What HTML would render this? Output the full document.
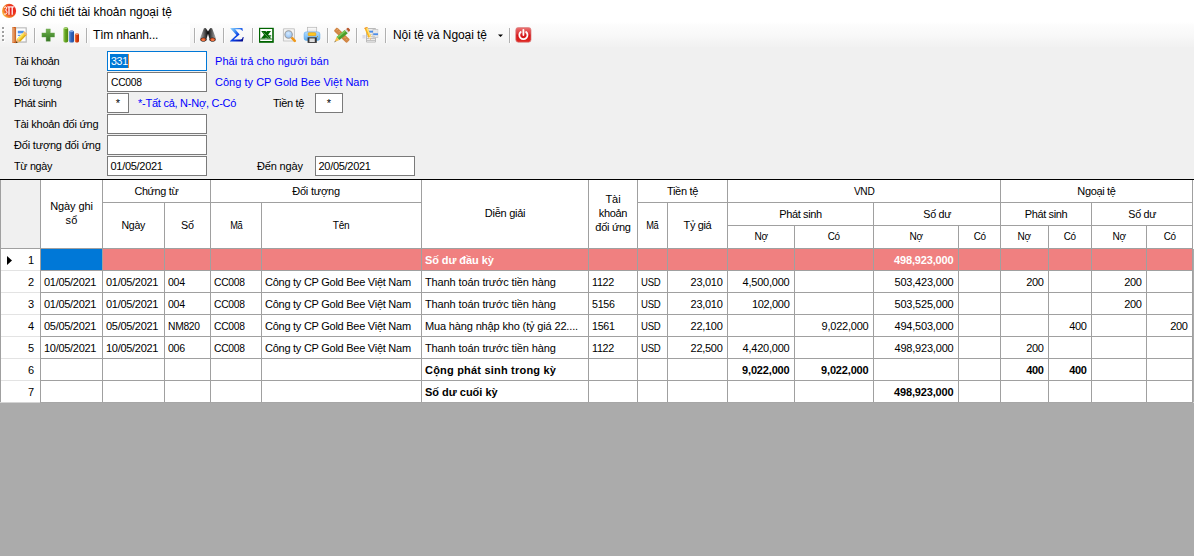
<!DOCTYPE html>
<html><head><meta charset="utf-8"><title>So chi tiet tai khoan ngoai te</title>
<style>
*{box-sizing:border-box;margin:0;padding:0}
html,body{width:1194px;height:556px;overflow:hidden;background:#ababab}
body{position:relative;font-family:"Liberation Sans",sans-serif;font-size:11px;color:#000}
.abs{position:absolute}
#title{left:0;top:0;width:1194px;height:23px;background:#fff}
#title span.t{position:absolute;left:22px;top:5px;font-size:12px;line-height:14px;white-space:nowrap}
#tb{left:0;top:22px;width:1194px;height:27px;background:linear-gradient(#ffffff,#fcfcfc 12%,#f8f8f8 50%,#f2f2f2 85%,#f0f0f0)}
#form{left:0;top:47px;width:1194px;height:132px;background:#f0f0f0}
.lbl{position:absolute;left:14px;white-space:nowrap;font-size:11px;line-height:13px}
.inp{position:absolute;height:20px;background:#fff;border:1px solid #7a7a7a;font-size:11px;line-height:13px;padding:3px 0 0 2.5px;white-space:nowrap}
.blue{color:#0000ff}
.tbt{font-size:12px;line-height:14px;white-space:nowrap}
.vl{position:absolute;width:1px;background:#a0a0a0}
.hl{position:absolute;height:1px;background:#a0a0a0}
.hc{position:absolute;height:13px;text-align:center;font-size:11px;line-height:13px;white-space:nowrap}
.c{position:absolute;height:21px;line-height:13px;padding-top:5px;font-size:11px;white-space:nowrap;overflow:hidden}
.r{text-align:right;padding-right:4.5px}
.l{padding-left:3px}
.b{font-weight:bold}
</style></head><body>

<div id="title" class="abs"><span class="t"><span style="letter-spacing:-0.031px">Sổ chi tiết tài khoản ngoại tệ</span></span></div>
<div id="tb" class="abs"></div>
<div id="form" class="abs"></div>
<div class="abs" style="left:90px;top:24px;width:100px;height:23px;background:#fff"></div>
<div class="abs tbt" style="left:93px;top:28px"><span style="letter-spacing:-0.176px">Tìm nhanh...</span></div>
<div class="abs tbt" style="left:393px;top:28px"><span style="letter-spacing:-0.089px">Nội tệ và Ngoại tệ</span></div>
<svg class="abs" style="left:1px;top:3px" width="16" height="16" viewBox="0 0 16 16">
<defs><radialGradient id="g3t" cx="0.66" cy="0.42" r="0.72"><stop offset="0" stop-color="#e81a1a"/><stop offset="0.45" stop-color="#ec3220"/><stop offset="0.75" stop-color="#f4802c"/><stop offset="1" stop-color="#fcd850"/></radialGradient></defs>
<circle cx="8.05" cy="7.9" r="7.1" fill="url(#g3t)"/>
<path d="M3.1 4.4 Q5.4 3 5.8 4.9 Q5.8 6.6 4.3 7 Q6.2 7.3 6 9.6 Q5.2 12 2.9 11" fill="none" stroke="#fff" stroke-width="0.95"/>
<path d="M6.3 3.9 H13.3" fill="none" stroke="#fff" stroke-width="1.1"/>
<path d="M8 3.9 V11.8 M11.2 3.9 V11.8" fill="none" stroke="#fff" stroke-width="1.25"/>
</svg>
<div class="abs" style="left:3px;top:28px;width:2px;height:2px;background:#fff"></div>
<div class="abs" style="left:2px;top:27px;width:2px;height:2px;background:#a0a0a0"></div>
<div class="abs" style="left:3px;top:32px;width:2px;height:2px;background:#fff"></div>
<div class="abs" style="left:2px;top:31px;width:2px;height:2px;background:#a0a0a0"></div>
<div class="abs" style="left:3px;top:36px;width:2px;height:2px;background:#fff"></div>
<div class="abs" style="left:2px;top:35px;width:2px;height:2px;background:#a0a0a0"></div>
<div class="abs" style="left:3px;top:40px;width:2px;height:2px;background:#fff"></div>
<div class="abs" style="left:2px;top:39px;width:2px;height:2px;background:#a0a0a0"></div>
<div class="abs" style="left:34px;top:28px;width:1px;height:15px;background:#b0b0b0"></div>
<div class="abs" style="left:35px;top:28px;width:1px;height:15px;background:#fefefe"></div>
<div class="abs" style="left:86px;top:28px;width:1px;height:15px;background:#b0b0b0"></div>
<div class="abs" style="left:87px;top:28px;width:1px;height:15px;background:#fefefe"></div>
<div class="abs" style="left:194px;top:28px;width:1px;height:15px;background:#b0b0b0"></div>
<div class="abs" style="left:195px;top:28px;width:1px;height:15px;background:#fefefe"></div>
<div class="abs" style="left:223px;top:28px;width:1px;height:15px;background:#b0b0b0"></div>
<div class="abs" style="left:224px;top:28px;width:1px;height:15px;background:#fefefe"></div>
<div class="abs" style="left:252px;top:28px;width:1px;height:15px;background:#b0b0b0"></div>
<div class="abs" style="left:253px;top:28px;width:1px;height:15px;background:#fefefe"></div>
<div class="abs" style="left:327px;top:28px;width:1px;height:15px;background:#b0b0b0"></div>
<div class="abs" style="left:328px;top:28px;width:1px;height:15px;background:#fefefe"></div>
<div class="abs" style="left:356px;top:28px;width:1px;height:15px;background:#b0b0b0"></div>
<div class="abs" style="left:357px;top:28px;width:1px;height:15px;background:#fefefe"></div>
<div class="abs" style="left:385px;top:28px;width:1px;height:15px;background:#b0b0b0"></div>
<div class="abs" style="left:386px;top:28px;width:1px;height:15px;background:#fefefe"></div>
<div class="abs" style="left:509px;top:28px;width:1px;height:15px;background:#b0b0b0"></div>
<div class="abs" style="left:510px;top:28px;width:1px;height:15px;background:#fefefe"></div>
<svg class="abs" style="left:12px;top:26px" width="17" height="18" viewBox="0 0 17 18">
<rect x="3.2" y="1.3" width="11.6" height="15.4" fill="#b8b8b8"/>
<rect x="4.2" y="2.4" width="9.4" height="13" fill="#fdfdfd"/>
<rect x="0.5" y="1" width="3.4" height="16" fill="#cf5c18"/>
<rect x="0.5" y="1" width="1.2" height="16" fill="#e08a50"/>
<path d="M0.5 3H3 M0.5 5H3 M0.5 7H3 M0.5 9H3 M0.5 11H3 M0.5 13H3 M0.5 15H3" stroke="#f4d0a8" stroke-width="0.7"/>
<rect x="5.8" y="4.8" width="6" height="2.6" fill="#4d8ee8"/>
<rect x="5.8" y="8.8" width="3" height="1.1" fill="#4d8ee8"/>
<path d="M3.8 17 L5 13 L12.4 5.6 L15.2 8.2 L8 15.8 Z" fill="#f5d030"/>
<path d="M5 13 L12.4 5.6 L13.3 6.4 L6 14Z" fill="#fae870"/>
<path d="M7 14.9 L14.3 7.4 L15.2 8.2 L8 15.8Z" fill="#dba818"/>
<path d="M3.8 17 L5 13 L8 15.8 Z" fill="#eab078"/>
<path d="M12.4 5.6 L15.2 8.2 L14 9.5 L11.2 6.9Z" fill="#f2b478"/>
<path d="M3.6 17.2 L4.3 15.2 L5.8 16.5Z" fill="#4a3010"/>
</svg>
<svg class="abs" style="left:41px;top:28px" width="15" height="15" viewBox="0 0 15 15">
<defs><linearGradient id="gpl" x1="0" y1="0" x2="0" y2="1"><stop offset="0" stop-color="#79b457"/><stop offset="0.5" stop-color="#4f9436"/><stop offset="1" stop-color="#387426"/></linearGradient></defs>
<path d="M5.1 0.9 H9.3 V4.9 H13.5 V9.1 H9.3 V13.3 H5.1 V9.1 H0.9 V4.9 H5.1 Z" fill="url(#gpl)" stroke="#5d9e44" stroke-opacity="0.45" stroke-width="0.8"/>
</svg>
<svg class="abs" style="left:62px;top:26px" width="18" height="18" viewBox="0 0 18 18">
<defs>
<linearGradient id="gb1" x1="0" y1="0" x2="1" y2="0"><stop offset="0" stop-color="#9ccc62"/><stop offset="0.45" stop-color="#62a21e"/><stop offset="1" stop-color="#4a8510"/></linearGradient>
<linearGradient id="gb2" x1="0" y1="0" x2="1" y2="0"><stop offset="0" stop-color="#6a9ae0"/><stop offset="0.45" stop-color="#2f62b8"/><stop offset="1" stop-color="#2450a0"/></linearGradient>
<linearGradient id="gb3" x1="0" y1="0" x2="1" y2="0"><stop offset="0" stop-color="#f58040"/><stop offset="0.45" stop-color="#d63a0a"/><stop offset="1" stop-color="#b82a05"/></linearGradient>
</defs>
<rect x="1.3" y="1.2" width="4.9" height="15.4" rx="1.8" fill="url(#gb1)"/>
<ellipse cx="3.75" cy="2.3" rx="1.9" ry="0.8" fill="#a8d878"/>
<rect x="7" y="4.5" width="5" height="12.1" rx="1.5" fill="url(#gb2)"/>
<ellipse cx="9.5" cy="5.5" rx="1.9" ry="0.7" fill="#80a8e8"/>
<rect x="12.8" y="7.6" width="4.2" height="8.8" rx="1.3" fill="url(#gb3)"/>
<ellipse cx="14.9" cy="8.5" rx="1.6" ry="0.6" fill="#f8a070"/>
</svg>
<svg class="abs" style="left:199px;top:26px" width="18" height="18" viewBox="0 0 18 18">
<defs><linearGradient id="gbl" x1="0" y1="0" x2="1" y2="0"><stop offset="0" stop-color="#b0b0b0"/><stop offset="0.4" stop-color="#707070"/><stop offset="0.8" stop-color="#2a2a2a"/><stop offset="1" stop-color="#080808"/></linearGradient>
<linearGradient id="gbr" x1="0" y1="0" x2="1" y2="0"><stop offset="0" stop-color="#080808"/><stop offset="0.2" stop-color="#2a2a2a"/><stop offset="0.6" stop-color="#707070"/><stop offset="1" stop-color="#b0b0b0"/></linearGradient></defs>
<path d="M4.8 2.4 Q5.8 1.5 6.9 2.3 L9 5.6 L9 7.8 L7.6 12.6 L7.6 14.2 Q4.3 16.6 1.1 14.2 L1.2 12 Z" fill="url(#gbl)"/>
<path d="M13.2 2.4 Q12.2 1.5 11.1 2.3 L9 5.6 L9 7.8 L10.4 12.6 L10.4 14.2 Q13.7 16.6 16.9 14.2 L16.8 12 Z" fill="url(#gbr)"/>
<ellipse cx="4.35" cy="13.6" rx="2.9" ry="2" fill="#3a2a24"/>
<ellipse cx="13.65" cy="13.6" rx="2.9" ry="2" fill="#3a2a24"/>
<ellipse cx="4.35" cy="13.5" rx="2.4" ry="1.5" fill="#e4531f"/>
<ellipse cx="13.65" cy="13.5" rx="2.4" ry="1.5" fill="#e4531f"/>
<ellipse cx="4.35" cy="14" rx="1.6" ry="0.8" fill="#f6895a"/>
<ellipse cx="13.65" cy="14" rx="1.6" ry="0.8" fill="#f6895a"/>
</svg>
<svg class="abs" style="left:229px;top:27px" width="16" height="16" viewBox="0 0 16 16">
<defs><linearGradient id="gsg" x1="0" y1="0" x2="1" y2="1"><stop offset="0" stop-color="#9ad8ff"/><stop offset="0.28" stop-color="#4a98f4"/><stop offset="0.55" stop-color="#0a40e4"/><stop offset="0.8" stop-color="#0418b0"/><stop offset="1" stop-color="#000070"/></linearGradient></defs>
<path d="M1.4 1 H13.4 L13.8 3.8 H13.1 Q12.7 2.2 11 2.2 H6.2 L10.6 7.5 L4.6 12.6 H11.6 Q13.3 12.6 13.8 10 H14.7 L13.8 14.6 H1 V13.9 L7.4 8 L1.4 1.6Z" fill="url(#gsg)"/>
</svg>
<svg class="abs" style="left:258px;top:27px" width="17" height="17" viewBox="0 0 17 17">
<rect x="1" y="0.8" width="14.8" height="15" fill="#006400"/>
<rect x="2.2" y="2" width="12" height="12" fill="#fff"/>
<rect x="2.2" y="11.6" width="12" height="0.8" fill="#0a6a0a"/>
<path d="M3.2 4.1 H7.6 L13.2 11.5 H8.8 Z" fill="#006400"/>
<path d="M9 4.1 H13 L7.2 11.5 H3 Z" fill="#006400"/>
<path d="M5.4 5.4 L10.8 11" stroke="#d8ecd8" stroke-width="0.4"/>
<path d="M10.6 8.2 H13.2 V9.6 H11.7Z" fill="#006400"/>
</svg>
<svg class="abs" style="left:282px;top:27px" width="15" height="17" viewBox="0 0 15 17">
<defs><radialGradient id="gmg" cx="0.45" cy="0.35" r="0.75"><stop offset="0" stop-color="#d4eaff"/><stop offset="0.6" stop-color="#a4ccf8"/><stop offset="1" stop-color="#8ab8f0"/></radialGradient></defs>
<rect x="0.9" y="1.2" width="12.1" height="13.4" rx="1.2" fill="#c8c8c8"/>
<rect x="2" y="2.3" width="9.9" height="11.2" rx="0.5" fill="#f4f4f4"/>
<path d="M10.2 11.2 L12.8 13.9" stroke="#f09818" stroke-width="2.6" stroke-linecap="round"/>
<circle cx="6.6" cy="7.5" r="3.7" fill="url(#gmg)" stroke="#9c9c9c" stroke-width="1.1"/>
</svg>
<svg class="abs" style="left:303px;top:26px" width="18" height="18" viewBox="0 0 18 18">
<defs><linearGradient id="gpr" x1="0" y1="0" x2="0" y2="1"><stop offset="0" stop-color="#b4dcff"/><stop offset="0.5" stop-color="#88c6f8"/><stop offset="1" stop-color="#5eaaec"/></linearGradient>
<linearGradient id="gpp" x1="0" y1="0" x2="0" y2="1"><stop offset="0" stop-color="#ffffff"/><stop offset="1" stop-color="#dcdcdc"/></linearGradient></defs>
<rect x="4.5" y="1.3" width="9.2" height="5.8" fill="url(#gpp)" stroke="#b4b4b4" stroke-width="0.7"/>
<rect x="1.1" y="5.9" width="15.8" height="8.5" rx="2.2" fill="url(#gpr)" stroke="#58a8ec" stroke-width="0.6"/>
<rect x="5.2" y="6.7" width="7.6" height="3" rx="0.7" fill="#fcc820" stroke="#e8960c" stroke-width="0.6"/>
<rect x="4.6" y="11.3" width="9.2" height="5.6" fill="#363636"/>
<rect x="6.4" y="12.4" width="5.4" height="3.6" fill="#dedede"/>
<rect x="14" y="10.2" width="1" height="1" fill="#a89030"/>
</svg>
<svg class="abs" style="left:333px;top:27px" width="18" height="17" viewBox="0 0 18 17">
<defs><linearGradient id="grl" x1="0" y1="1" x2="1" y2="0"><stop offset="0" stop-color="#c06c28"/><stop offset="0.5" stop-color="#d48a48"/><stop offset="1" stop-color="#c47230"/></linearGradient></defs>
<path d="M3.4 0.8 Q4.4 0.4 5 1.2 L16.4 12 Q16.9 12.8 16.2 13.5 L14.2 15.4 Q13.4 16 12.6 15.3 L1.4 4.6 Q0.8 3.8 1.4 3Z" fill="url(#grl)"/>
<path d="M3.6 3.4 L4.8 2.2 M5.6 5.2 L6.4 4.4 M7.4 6.9 L8.6 5.7 M11.6 11 L12.8 9.8 M13.4 12.8 L14.2 12" stroke="#f0d0a0" stroke-width="0.5"/>
<path d="M11.8 3 L14.8 6.2 L6.4 13 L3.6 10Z" fill="#4a9e2c"/>
<path d="M11.8 3 L13 4.3 L4.7 11.2 L3.6 10Z" fill="#7cc858"/>
<path d="M13.2 1.9 L15.9 5 L14.8 6.2 L11.8 3Z" fill="#d8d8d8"/>
<path d="M14.3 0.9 Q15 0.4 15.6 1 L16.9 2.6 Q17.3 3.3 16.8 3.8 L15.9 5 L13.2 1.9Z" fill="#b85a30"/>
<path d="M3.6 10 L6.4 13 L1.4 15.2Z" fill="#f6be48"/>
<path d="M1 15.4 L2.2 13.4 L3.2 14.6Z" fill="#8a8a8a"/>
</svg>
<svg class="abs" style="left:362px;top:26px" width="18" height="18" viewBox="0 0 18 18">
<rect x="0.4" y="9" width="3.2" height="3.4" fill="#d4d4e4" opacity="0.75"/>
<rect x="4.1" y="2" width="9.8" height="14.6" rx="0.8" fill="#b4b4b4"/>
<rect x="5" y="2.9" width="8" height="12.8" fill="#ececec"/>
<rect x="10.6" y="3.1" width="5.6" height="8.7" fill="#c0c0c0"/>
<rect x="11.2" y="3.8" width="4.6" height="7.3" fill="#e8e8e8"/>
<rect x="6.4" y="4.7" width="4.6" height="1.9" fill="#4d8ee8"/>
<rect x="11.2" y="7.3" width="4.8" height="1.8" fill="#4d8ee8"/>
<rect x="5" y="8" width="6" height="0.7" fill="#c4c4c4"/>
<rect x="5" y="10" width="8" height="0.7" fill="#c4c4c4"/>
<rect x="5" y="12.2" width="8" height="0.8" fill="#b8b8b8"/>
<rect x="5" y="14.2" width="8" height="0.8" fill="#b8b8b8"/>
<path d="M2.4 2 L5.2 0.9 L9.2 10.6 L8.7 13.8 L6.3 11.6Z" fill="#fbb51c"/>
<path d="M3.8 1.5 L5.2 0.9 L9.2 10.6 L7.9 11.1Z" fill="#fde27c"/>
<path d="M6.3 11.6 L9.2 10.6 L8.7 13.8Z" fill="#fae8d0"/>
<path d="M8.3 12.6 L8.9 12.4 L8.7 13.8Z" fill="#b05020"/>
<path d="M2.4 2 L5.2 0.9 L5.6 1.8 L2.8 3Z" fill="#ee9030"/>
</svg>
<svg class="abs" style="left:498px;top:34px" width="6" height="4" viewBox="0 0 6 4"><path d="M0 0.5 H5 L2.5 3Z" fill="#000"/></svg>
<svg class="abs" style="left:515px;top:27px" width="17" height="16" viewBox="0 0 17 16">
<defs><linearGradient id="gpw" x1="0" y1="0" x2="0" y2="1"><stop offset="0" stop-color="#ec7070"/><stop offset="0.45" stop-color="#dc3034"/><stop offset="0.5" stop-color="#d41418"/><stop offset="1" stop-color="#e02a24"/></linearGradient></defs>
<rect x="0.8" y="0.6" width="15.2" height="14.6" rx="2.4" fill="url(#gpw)" stroke="#d88080" stroke-width="0.7"/>
<path d="M5.7 5 A4.1 4.1 0 1 0 11.1 5" fill="none" stroke="#fff" stroke-width="1.8" stroke-linecap="round"/>
<path d="M8.4 2.8 V8" stroke="#fff" stroke-width="1.8" stroke-linecap="round"/>
</svg>
<div class="lbl" style="top:55px"><span style="letter-spacing:-0.336px">Tài khoản</span></div>
<div class="lbl" style="top:76px"><span style="letter-spacing:-0.189px">Đối tượng</span></div>
<div class="lbl" style="top:97px"><span style="letter-spacing:-0.368px">Phát sinh</span></div>
<div class="lbl" style="top:118px"><span style="letter-spacing:-0.261px">Tài khoản đối ứng</span></div>
<div class="lbl" style="top:139px"><span style="letter-spacing:-0.181px">Đối tượng đối ứng</span></div>
<div class="lbl" style="top:160px"><span style="display:inline-block;letter-spacing:-0.3px;transform:scaleX(0.98);transform-origin:left center">Từ ngày</span></div>
<div class="inp" style="left:107px;top:51px;width:100px;border-color:#0078d7"><span style="position:absolute;left:2px;top:2px;width:18px;height:14px;background:#0078d7"></span><span style="position:absolute;left:20px;top:2px;width:1px;height:14px;background:#e8883a"></span><span style="position:relative;color:#fff"><span style="display:inline-block;letter-spacing:-0.3px;transform:scaleX(0.964);transform-origin:left center">331</span></span></div>
<div class="inp" style="left:107px;top:72px;width:100px"><span style="display:inline-block;letter-spacing:-0.3px;transform:scaleX(0.9386);transform-origin:left center">CC008</span></div>
<div class="inp" style="left:107px;top:93px;width:22px;text-align:center;padding-left:0">*</div>
<div class="inp" style="left:107px;top:114px;width:100px"></div>
<div class="inp" style="left:107px;top:135px;width:100px"></div>
<div class="inp" style="left:107px;top:156px;width:100px"><span style="letter-spacing:-0.293px">01/05/2021</span></div>
<div class="inp" style="left:315px;top:93px;width:28px;text-align:center;padding-left:0">*</div>
<div class="inp" style="left:315px;top:156px;width:100px"><span style="letter-spacing:-0.293px">20/05/2021</span></div>
<div class="lbl blue" style="left:215px;top:55px"><span style="letter-spacing:0.071px">Phải trả cho người bán</span></div>
<div class="lbl blue" style="left:215px;top:76px"><span style="letter-spacing:0.022px">Công ty CP Gold Bee Việt Nam</span></div>
<div class="lbl blue" style="left:138px;top:97px"><span style="letter-spacing:-0.25px">*-Tất cả, N-Nợ, C-Có</span></div>
<div class="lbl" style="left:273px;top:97px"><span style="letter-spacing:-0.3px">Tiền tệ</span></div>
<div class="lbl" style="left:257px;top:160px"><span style="letter-spacing:-0.155px">Đến ngày</span></div>
<div class="abs" style="left:0;top:179px;width:1194px;height:224px;background:#fff"></div>
<div class="abs" style="left:1193px;top:249px;width:1px;height:154px;background:#ababab"></div>
<div class="abs" style="left:1px;top:180px;width:39px;height:68px;background:#f0f0f0"></div>
<div class="abs" style="left:0;top:179px;width:1194px;height:1px;background:#000"></div>
<div class="abs" style="left:0;top:180px;width:1px;height:223px;background:#a0a0a0"></div>
<div class="abs" style="left:0;top:402px;width:1194px;height:1px;background:#d4d4d4"></div>
<div class="abs" style="left:41px;top:249px;width:61px;height:21px;background:#0078d7"></div>
<div class="abs" style="left:103px;top:249px;width:1089px;height:21px;background:#f08080"></div>
<div class="vl" style="left:40px;top:248px;height:154px"></div>
<div class="vl" style="left:102px;top:248px;height:154px"></div>
<div class="vl" style="left:164px;top:248px;height:154px"></div>
<div class="vl" style="left:210px;top:248px;height:154px"></div>
<div class="vl" style="left:261px;top:248px;height:154px"></div>
<div class="vl" style="left:421px;top:248px;height:154px"></div>
<div class="vl" style="left:588px;top:248px;height:154px"></div>
<div class="vl" style="left:637px;top:248px;height:154px"></div>
<div class="vl" style="left:667px;top:248px;height:154px"></div>
<div class="vl" style="left:727px;top:248px;height:154px"></div>
<div class="vl" style="left:794px;top:248px;height:154px"></div>
<div class="vl" style="left:873px;top:248px;height:154px"></div>
<div class="vl" style="left:958px;top:248px;height:154px"></div>
<div class="vl" style="left:1000px;top:248px;height:154px"></div>
<div class="vl" style="left:1048px;top:248px;height:154px"></div>
<div class="vl" style="left:1091px;top:248px;height:154px"></div>
<div class="vl" style="left:1146px;top:248px;height:154px"></div>
<div class="vl" style="left:1192px;top:248px;height:154px"></div>
<div class="vl" style="left:40px;top:180px;height:68px"></div>
<div class="vl" style="left:102px;top:180px;height:68px"></div>
<div class="vl" style="left:210px;top:180px;height:68px"></div>
<div class="vl" style="left:421px;top:180px;height:68px"></div>
<div class="vl" style="left:588px;top:180px;height:68px"></div>
<div class="vl" style="left:637px;top:180px;height:68px"></div>
<div class="vl" style="left:727px;top:180px;height:68px"></div>
<div class="vl" style="left:1000px;top:180px;height:68px"></div>
<div class="vl" style="left:1192px;top:180px;height:68px"></div>
<div class="vl" style="left:164px;top:203px;height:45px"></div>
<div class="vl" style="left:261px;top:203px;height:45px"></div>
<div class="vl" style="left:667px;top:203px;height:45px"></div>
<div class="vl" style="left:873px;top:203px;height:45px"></div>
<div class="vl" style="left:1091px;top:203px;height:45px"></div>
<div class="vl" style="left:794px;top:226px;height:22px"></div>
<div class="vl" style="left:958px;top:226px;height:22px"></div>
<div class="vl" style="left:1048px;top:226px;height:22px"></div>
<div class="vl" style="left:1146px;top:226px;height:22px"></div>
<div class="hl" style="left:1px;top:248px;width:1192px"></div>
<div class="hl" style="left:102px;top:202px;width:108px"></div>
<div class="hl" style="left:210px;top:202px;width:211px"></div>
<div class="hl" style="left:637px;top:202px;width:90px"></div>
<div class="hl" style="left:727px;top:202px;width:273px"></div>
<div class="hl" style="left:1000px;top:202px;width:192px"></div>
<div class="hl" style="left:727px;top:225px;width:465px"></div>
<div class="hl" style="left:1px;top:270px;width:39px;background:#e3e3e3"></div>
<div class="hl" style="left:40px;top:270px;width:1153px"></div>
<div class="hl" style="left:1px;top:292px;width:39px;background:#e3e3e3"></div>
<div class="hl" style="left:40px;top:292px;width:1153px"></div>
<div class="hl" style="left:1px;top:314px;width:39px;background:#e3e3e3"></div>
<div class="hl" style="left:40px;top:314px;width:1153px"></div>
<div class="hl" style="left:1px;top:336px;width:39px;background:#e3e3e3"></div>
<div class="hl" style="left:40px;top:336px;width:1153px"></div>
<div class="hl" style="left:1px;top:358px;width:39px;background:#e3e3e3"></div>
<div class="hl" style="left:40px;top:358px;width:1153px"></div>
<div class="hl" style="left:1px;top:380px;width:39px;background:#e3e3e3"></div>
<div class="hl" style="left:40px;top:380px;width:1153px"></div>
<div class="hl" style="left:40px;top:402px;width:1153px;background:#a6a6a6"></div>
<div class="hc" style="left:41px;top:200px;width:61px"><span style="letter-spacing:-0.11px">Ngày ghi</span></div>
<div class="hc" style="left:41px;top:214px;width:61px"><span style="letter-spacing:0.2px">sổ</span></div>
<div class="hc" style="left:103px;top:185px;width:107px"><span style="display:inline-block;letter-spacing:-0.3px;transform:scaleX(0.9831);transform-origin:center center">Chứng từ</span></div>
<div class="hc" style="left:103px;top:219px;width:61px"><span style="display:inline-block;letter-spacing:-0.3px;transform:scaleX(0.9613);transform-origin:center center">Ngày</span></div>
<div class="hc" style="left:165px;top:219px;width:45px"><span style="display:inline-block;letter-spacing:-0.3px;transform:scaleX(0.9818);transform-origin:center center">Số</span></div>
<div class="hc" style="left:211px;top:185px;width:210px"><span style="letter-spacing:-0.189px">Đối tượng</span></div>
<div class="hc" style="left:211px;top:219px;width:50px"><span style="display:inline-block;letter-spacing:-0.3px;transform:scaleX(0.8384);transform-origin:center center">Mã</span></div>
<div class="hc" style="left:262px;top:219px;width:159px"><span style="display:inline-block;letter-spacing:-0.3px;transform:scaleX(0.9212);transform-origin:center center">Tên</span></div>
<div class="hc" style="left:422px;top:207px;width:166px"><span style="letter-spacing:-0.27px">Diễn giải</span></div>
<div class="hc" style="left:589px;top:193px;width:48px"><span style="letter-spacing:-0.068px">Tài</span></div>
<div class="hc" style="left:589px;top:207px;width:48px"><span style="letter-spacing:-0.338px">khoản</span></div>
<div class="hc" style="left:589px;top:221px;width:48px"><span style="letter-spacing:-0.286px">đối ứng</span></div>
<div class="hc" style="left:638px;top:185px;width:89px"><span style="letter-spacing:-0.3px">Tiền tệ</span></div>
<div class="hc" style="left:638px;top:219px;width:29px"><span style="display:inline-block;letter-spacing:-0.3px;transform:scaleX(0.8384);transform-origin:center center">Mã</span></div>
<div class="hc" style="left:668px;top:219px;width:59px"><span style="letter-spacing:-0.367px">Tỷ giá</span></div>
<div class="hc" style="left:728px;top:185px;width:272px"><span style="display:inline-block;letter-spacing:-0.3px;transform:scaleX(0.9215);transform-origin:center center">VND</span></div>
<div class="hc" style="left:728px;top:208px;width:145px"><span style="letter-spacing:-0.368px">Phát sinh</span></div>
<div class="hc" style="left:874px;top:208px;width:126px"><span style="display:inline-block;letter-spacing:-0.3px;transform:scaleX(0.9752);transform-origin:center center">Số dư</span></div>
<div class="hc" style="left:728px;top:230px;width:66px"><span style="display:inline-block;letter-spacing:-0.3px;transform:scaleX(0.9151);transform-origin:center center">Nợ</span></div>
<div class="hc" style="left:795px;top:230px;width:78px"><span style="display:inline-block;letter-spacing:-0.3px;transform:scaleX(0.9015);transform-origin:center center">Có</span></div>
<div class="hc" style="left:874px;top:230px;width:84px"><span style="display:inline-block;letter-spacing:-0.3px;transform:scaleX(0.9151);transform-origin:center center">Nợ</span></div>
<div class="hc" style="left:959px;top:230px;width:41px"><span style="display:inline-block;letter-spacing:-0.3px;transform:scaleX(0.9015);transform-origin:center center">Có</span></div>
<div class="hc" style="left:1001px;top:185px;width:191px"><span style="letter-spacing:-0.336px">Ngoại tệ</span></div>
<div class="hc" style="left:1001px;top:208px;width:90px"><span style="letter-spacing:-0.368px">Phát sinh</span></div>
<div class="hc" style="left:1092px;top:208px;width:100px"><span style="display:inline-block;letter-spacing:-0.3px;transform:scaleX(0.9752);transform-origin:center center">Số dư</span></div>
<div class="hc" style="left:1001px;top:230px;width:47px"><span style="display:inline-block;letter-spacing:-0.3px;transform:scaleX(0.9151);transform-origin:center center">Nợ</span></div>
<div class="hc" style="left:1049px;top:230px;width:42px"><span style="display:inline-block;letter-spacing:-0.3px;transform:scaleX(0.9015);transform-origin:center center">Có</span></div>
<div class="hc" style="left:1092px;top:230px;width:54px"><span style="display:inline-block;letter-spacing:-0.3px;transform:scaleX(0.9151);transform-origin:center center">Nợ</span></div>
<div class="hc" style="left:1147px;top:230px;width:45px"><span style="display:inline-block;letter-spacing:-0.3px;transform:scaleX(0.9015);transform-origin:center center">Có</span></div>
<div class="c r" style="left:1px;top:249px;width:39px;padding-right:6px">1</div>
<div class="c l b" style="left:422px;top:249px;width:166px;color:#fff"><span style="letter-spacing:-0.08px">Số dư đầu kỳ</span></div>
<div class="c r b" style="left:874px;top:249px;width:84px;color:#fff"><span style="letter-spacing:-0.155px">498,923,000</span></div>
<div class="c r" style="left:1px;top:271px;width:39px;padding-right:6px">2</div>
<div class="c l" style="left:41px;top:271px;width:61px"><span style="letter-spacing:-0.293px">01/05/2021</span></div>
<div class="c l" style="left:103px;top:271px;width:61px"><span style="letter-spacing:-0.293px">01/05/2021</span></div>
<div class="c l" style="left:165px;top:271px;width:45px"><span style="display:inline-block;letter-spacing:-0.3px;transform:scaleX(0.964);transform-origin:left center">004</span></div>
<div class="c l" style="left:211px;top:271px;width:50px"><span style="display:inline-block;letter-spacing:-0.3px;transform:scaleX(0.9386);transform-origin:left center">CC008</span></div>
<div class="c l" style="left:262px;top:271px;width:159px"><span style="letter-spacing:-0.259px">Công ty CP Gold Bee Việt Nam</span></div>
<div class="c l" style="left:422px;top:271px;width:166px"><span style="letter-spacing:-0.12px">Thanh toán trước tiền hàng</span></div>
<div class="c l" style="left:589px;top:271px;width:48px"><span style="display:inline-block;letter-spacing:-0.3px;transform:scaleX(0.9807);transform-origin:left center">1122</span></div>
<div class="c l" style="left:638px;top:271px;width:29px"><span style="display:inline-block;letter-spacing:-0.3px;transform:scaleX(0.8686);transform-origin:left center">USD</span></div>
<div class="c r" style="left:668px;top:271px;width:59px"><span style="letter-spacing:-0.285px">23,010</span></div>
<div class="c r" style="left:728px;top:271px;width:66px"><span style="letter-spacing:-0.227px">4,500,000</span></div>
<div class="c r" style="left:874px;top:271px;width:84px"><span style="letter-spacing:-0.195px">503,423,000</span></div>
<div class="c r" style="left:1001px;top:271px;width:47px"><span style="letter-spacing:-0.368px">200</span></div>
<div class="c r" style="left:1092px;top:271px;width:54px"><span style="letter-spacing:-0.368px">200</span></div>
<div class="c r" style="left:1px;top:293px;width:39px;padding-right:6px">3</div>
<div class="c l" style="left:41px;top:293px;width:61px"><span style="letter-spacing:-0.293px">01/05/2021</span></div>
<div class="c l" style="left:103px;top:293px;width:61px"><span style="letter-spacing:-0.293px">01/05/2021</span></div>
<div class="c l" style="left:165px;top:293px;width:45px"><span style="display:inline-block;letter-spacing:-0.3px;transform:scaleX(0.964);transform-origin:left center">004</span></div>
<div class="c l" style="left:211px;top:293px;width:50px"><span style="display:inline-block;letter-spacing:-0.3px;transform:scaleX(0.9386);transform-origin:left center">CC008</span></div>
<div class="c l" style="left:262px;top:293px;width:159px"><span style="letter-spacing:-0.259px">Công ty CP Gold Bee Việt Nam</span></div>
<div class="c l" style="left:422px;top:293px;width:166px"><span style="letter-spacing:-0.12px">Thanh toán trước tiền hàng</span></div>
<div class="c l" style="left:589px;top:293px;width:48px"><span style="display:inline-block;letter-spacing:-0.3px;transform:scaleX(0.9679);transform-origin:left center">5156</span></div>
<div class="c l" style="left:638px;top:293px;width:29px"><span style="display:inline-block;letter-spacing:-0.3px;transform:scaleX(0.8686);transform-origin:left center">USD</span></div>
<div class="c r" style="left:668px;top:293px;width:59px"><span style="letter-spacing:-0.285px">23,010</span></div>
<div class="c r" style="left:728px;top:293px;width:66px"><span style="letter-spacing:-0.307px">102,000</span></div>
<div class="c r" style="left:874px;top:293px;width:84px"><span style="letter-spacing:-0.195px">503,525,000</span></div>
<div class="c r" style="left:1092px;top:293px;width:54px"><span style="letter-spacing:-0.368px">200</span></div>
<div class="c r" style="left:1px;top:315px;width:39px;padding-right:6px">4</div>
<div class="c l" style="left:41px;top:315px;width:61px"><span style="letter-spacing:-0.293px">05/05/2021</span></div>
<div class="c l" style="left:103px;top:315px;width:61px"><span style="letter-spacing:-0.293px">05/05/2021</span></div>
<div class="c l" style="left:165px;top:315px;width:45px"><span style="display:inline-block;letter-spacing:-0.3px;transform:scaleX(0.9343);transform-origin:left center">NM820</span></div>
<div class="c l" style="left:211px;top:315px;width:50px"><span style="display:inline-block;letter-spacing:-0.3px;transform:scaleX(0.9386);transform-origin:left center">CC008</span></div>
<div class="c l" style="left:262px;top:315px;width:159px"><span style="letter-spacing:-0.259px">Công ty CP Gold Bee Việt Nam</span></div>
<div class="c l" style="left:422px;top:315px;width:166px"><span style="letter-spacing:-0.149px">Mua hàng nhập kho (tỷ giá 22....</span></div>
<div class="c l" style="left:589px;top:315px;width:48px"><span style="display:inline-block;letter-spacing:-0.3px;transform:scaleX(0.9679);transform-origin:left center">1561</span></div>
<div class="c l" style="left:638px;top:315px;width:29px"><span style="display:inline-block;letter-spacing:-0.3px;transform:scaleX(0.8686);transform-origin:left center">USD</span></div>
<div class="c r" style="left:668px;top:315px;width:59px"><span style="letter-spacing:-0.285px">22,100</span></div>
<div class="c r" style="left:795px;top:315px;width:78px"><span style="letter-spacing:-0.227px">9,022,000</span></div>
<div class="c r" style="left:874px;top:315px;width:84px"><span style="letter-spacing:-0.195px">494,503,000</span></div>
<div class="c r" style="left:1049px;top:315px;width:42px"><span style="letter-spacing:-0.368px">400</span></div>
<div class="c r" style="left:1147px;top:315px;width:45px"><span style="letter-spacing:-0.368px">200</span></div>
<div class="c r" style="left:1px;top:337px;width:39px;padding-right:6px">5</div>
<div class="c l" style="left:41px;top:337px;width:61px"><span style="letter-spacing:-0.293px">10/05/2021</span></div>
<div class="c l" style="left:103px;top:337px;width:61px"><span style="letter-spacing:-0.293px">10/05/2021</span></div>
<div class="c l" style="left:165px;top:337px;width:45px"><span style="display:inline-block;letter-spacing:-0.3px;transform:scaleX(0.964);transform-origin:left center">006</span></div>
<div class="c l" style="left:211px;top:337px;width:50px"><span style="display:inline-block;letter-spacing:-0.3px;transform:scaleX(0.9386);transform-origin:left center">CC008</span></div>
<div class="c l" style="left:262px;top:337px;width:159px"><span style="letter-spacing:-0.259px">Công ty CP Gold Bee Việt Nam</span></div>
<div class="c l" style="left:422px;top:337px;width:166px"><span style="letter-spacing:-0.12px">Thanh toán trước tiền hàng</span></div>
<div class="c l" style="left:589px;top:337px;width:48px"><span style="display:inline-block;letter-spacing:-0.3px;transform:scaleX(0.9807);transform-origin:left center">1122</span></div>
<div class="c l" style="left:638px;top:337px;width:29px"><span style="display:inline-block;letter-spacing:-0.3px;transform:scaleX(0.8686);transform-origin:left center">USD</span></div>
<div class="c r" style="left:668px;top:337px;width:59px"><span style="letter-spacing:-0.285px">22,500</span></div>
<div class="c r" style="left:728px;top:337px;width:66px"><span style="letter-spacing:-0.227px">4,420,000</span></div>
<div class="c r" style="left:874px;top:337px;width:84px"><span style="letter-spacing:-0.195px">498,923,000</span></div>
<div class="c r" style="left:1001px;top:337px;width:47px"><span style="letter-spacing:-0.368px">200</span></div>
<div class="c r" style="left:1px;top:359px;width:39px;padding-right:6px">6</div>
<div class="c l b" style="left:422px;top:359px;width:166px"><span style="letter-spacing:0.201px">Cộng phát sinh trong kỳ</span></div>
<div class="c r b" style="left:728px;top:359px;width:66px"><span style="letter-spacing:-0.165px">9,022,000</span></div>
<div class="c r b" style="left:795px;top:359px;width:78px"><span style="letter-spacing:-0.165px">9,022,000</span></div>
<div class="c r b" style="left:1001px;top:359px;width:47px"><span style="letter-spacing:-0.368px">400</span></div>
<div class="c r b" style="left:1049px;top:359px;width:42px"><span style="letter-spacing:-0.368px">400</span></div>
<div class="c r" style="left:1px;top:381px;width:39px;padding-right:6px">7</div>
<div class="c l b" style="left:422px;top:381px;width:166px"><span style="letter-spacing:-0.012px">Số dư cuối kỳ</span></div>
<div class="c r b" style="left:874px;top:381px;width:84px"><span style="letter-spacing:-0.155px">498,923,000</span></div>
<svg class="abs" style="left:7px;top:256px" width="5" height="9"><path d="M0 0L5 4.5L0 9Z" fill="#000"/></svg>
</body></html>
